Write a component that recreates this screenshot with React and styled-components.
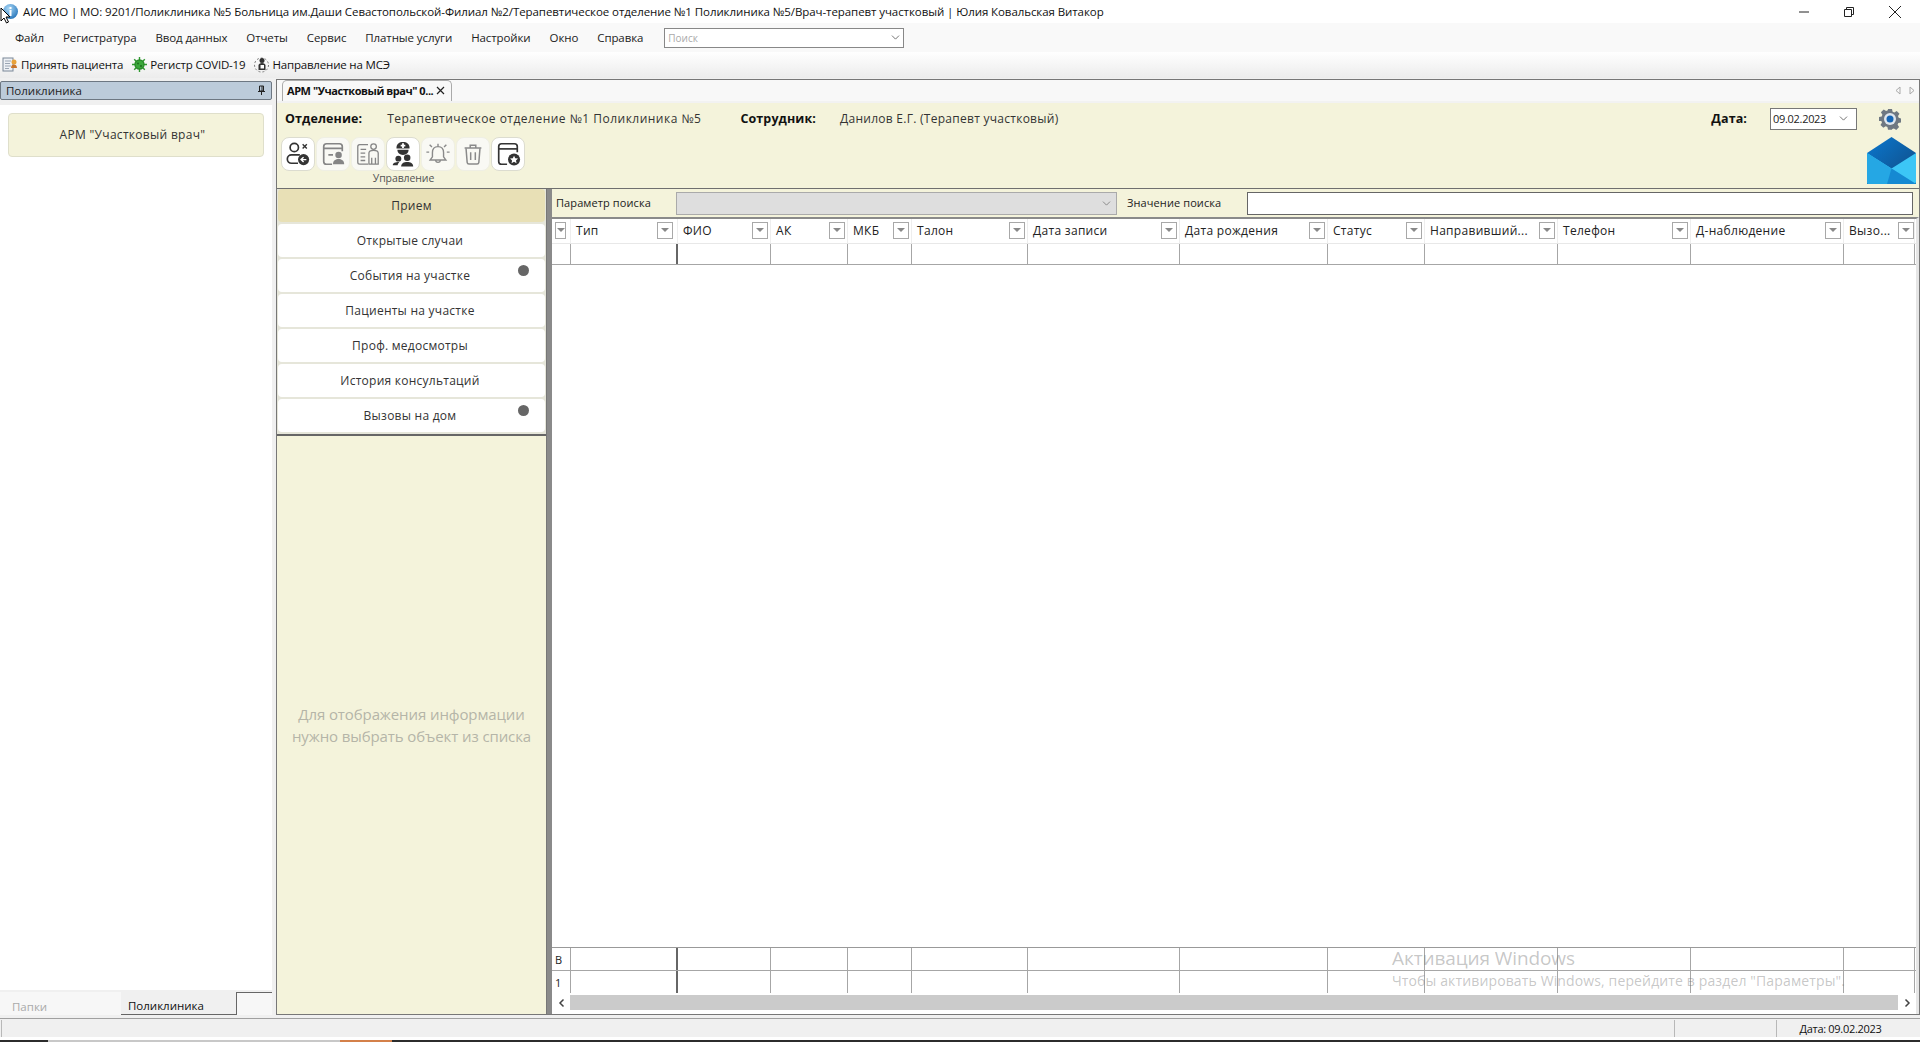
import styled, { createGlobalStyle } from "styled-components";
import { ChevronDown } from "lucide-react";

const GlobalStyle = createGlobalStyle`
  html, body {
    margin: 0;
    padding: 0;
    background: #fff;
    overflow: hidden;
  }
  * { box-sizing: border-box; }
  body {
    font-family: "Open Sans", "Noto Sans", "Liberation Sans", sans-serif;
    font-size: 12px;
    color: #222;
  }
`;

const COLUMNS = "19px 107px 93px 77px 64px 116px 152px 148px 97px 133px 133px 153px 71px";

const Window = styled.div`
  position: relative;
  display: flex;
  flex-direction: column;
  width: 1920px;
  height: 1042px;
  overflow: hidden;
  background: #fff;
`;

const TitleBar = styled.div`
  display: flex;
  align-items: center;
  height: 23px;
  flex: none;
  padding-left: 2px;
  background: #fff;
`;

const TitleText = styled.div`
  margin-left: 4px;
  font-size: 11.5px;
  letter-spacing: -0.08px;
  color: #111;
  white-space: nowrap;
`;

const WindowControls = styled.div`
  display: flex;
  align-items: center;
  margin-left: auto;
  gap: 33px;
  padding-right: 18px;
`;

const MenuBar = styled.div`
  display: flex;
  align-items: center;
  gap: 19px;
  height: 29px;
  flex: none;
  padding-left: 15px;
  background: #f9f9f9;
`;

const MenuItem = styled.span`
  font-size: 11.5px;
  letter-spacing: -0.1px;
  color: #222;
`;

const SearchCombo = styled.div`
  display: flex;
  align-items: center;
  justify-content: space-between;
  width: 240px;
  height: 20px;
  margin-left: 2px;
  padding: 0 1px 0 3px;
  background: #fff;
  border: 1px solid #888;
  font-size: 10px;
  color: #aaa;
`;

const ToolBar = styled.div`
  display: flex;
  align-items: center;
  height: 26px;
  flex: none;
  padding: 0 0 2px 2px;
  background: linear-gradient(#fff, #ececec);
`;

const ToolButton = styled.div`
  display: flex;
  align-items: center;
  gap: 2px;
  margin-right: 8px;
  font-size: 11.5px;
  letter-spacing: -0.18px;
  color: #111;
  white-space: nowrap;
`;

const Body = styled.div`
  display: flex;
  flex: 1;
  min-height: 0;
  background: #f0f0f0;
`;

const LeftPane = styled.div`
  display: flex;
  flex-direction: column;
  width: 272px;
  flex: none;
  padding-top: 3px;
`;

const PaneHeader = styled.div`
  display: flex;
  align-items: center;
  justify-content: space-between;
  height: 19px;
  flex: none;
  padding: 0 5px 1px;
  background: #bccbda;
  border: 1px solid #6d7782;
  border-radius: 2px;
  font-size: 11.5px;
  color: #222;
`;

const PaneContent = styled.div`
  flex: 1;
  margin-top: 5px;
  padding: 8px 8px 0;
  background: #fff;
`;

const ArmCard = styled.div`
  display: flex;
  align-items: center;
  justify-content: center;
  height: 44px;
  padding: 0 7px 1px 0;
  background: #f4f3db;
  border: 1px solid #dfdfcb;
  border-radius: 4px;
  font-size: 12px;
  letter-spacing: 0.3px;
  color: #333;
`;

const PaneTabs = styled.div`
  display: flex;
  height: 23px;
  flex: none;
  margin-top: 2px;
  margin-bottom: 3px;
  background: #f7f7f7;
`;

const PaneTab = styled.div`
  display: flex;
  align-items: flex-end;
  width: ${(p) => p.$width}px;
  padding-left: ${(p) => p.$pad}px;
  font-size: 11.5px;
  line-height: 16px;
  color: ${(p) => (p.$active ? "#111" : "#aaa")};
  background: ${(p) => (p.$active ? "#f0f0f0" : "transparent")};
  border-bottom: ${(p) => (p.$active ? "1px solid #666" : "none")};
  border-right: ${(p) => (p.$active ? "1px solid #666" : "none")};
`;

const PaneTabRest = styled.div`
  flex: 1;
  border-top: 1px solid #666;
`;

const MainPane = styled.div`
  display: flex;
  flex-direction: column;
  flex: 1;
  min-width: 0;
  margin: 1px 0 3px 4px;
  background: #f8f8f8;
  border: 1px solid #777;
`;

const TabStrip = styled.div`
  display: flex;
  align-items: flex-end;
  height: 23px;
  flex: none;
  padding-left: 5px;
  border-bottom: 2px solid #f2f2f2;
`;

const DocTab = styled.div`
  display: flex;
  align-items: center;
  justify-content: space-between;
  width: 170px;
  height: 21px;
  padding: 0 6px 2px 4px;
  background: #f8f8f8;
  border: 1px solid #aaa;
  border-bottom: none;
  border-radius: 5px 5px 0 0;
  font-size: 11px;
  font-weight: 700;
  letter-spacing: -0.45px;
  color: #111;
  white-space: nowrap;
`;

const TabArrows = styled.div`
  display: flex;
  gap: 8px;
  margin-left: auto;
  margin-right: 4px;
  align-self: center;
`;

const WorkHeader = styled.div`
  display: flex;
  height: 85px;
  flex: none;
  background: #f4f3db;
`;

const HeaderMain = styled.div`
  display: flex;
  flex-direction: column;
  flex: 1;
  min-width: 0;
  padding: 4px 0 0 8px;
`;

const HeaderSide = styled.div`
  display: flex;
  flex-direction: column;
  align-items: flex-end;
  flex: none;
  padding: 4px 3px 0 0;
`;

const InfoRow = styled.div`
  display: flex;
  align-items: center;
  height: 24px;
  padding-bottom: 1px;
`;

const InfoLabel = styled.span`
  font-size: 12.5px;
  font-weight: 700;
  letter-spacing: 0.1px;
  color: #111;
  margin-left: ${(p) => p.$left || 0}px;
`;

const InfoValue = styled.span`
  font-size: 12px;
  letter-spacing: ${(p) => p.$spacing}px;
  color: #333;
  margin-left: ${(p) => p.$left || 0}px;
`;

const DateCombo = styled.div`
  display: flex;
  align-items: center;
  justify-content: space-between;
  width: 87px;
  height: 22px;
  margin-left: 23px;
  padding: 0 6px 0 2px;
  background: #fff;
  border: 1px solid #777;
  font-size: 11px;
  letter-spacing: -0.3px;
  color: #222;
`;

const GearSlot = styled.div`
  display: flex;
  margin-left: 22px;
  margin-right: 15px;
`;

const IconRow = styled.div`
  display: flex;
  gap: 1px;
  margin-top: 6px;
  margin-left: -4px;
`;

const IconButton = styled.div`
  display: flex;
  align-items: center;
  justify-content: center;
  width: 34px;
  height: 34px;
  background: ${(p) => (p.$off ? "#f9f9f4" : "#fff")};
  border: 1px solid ${(p) => (p.$off ? "#efefe4" : "#dcdcd0")};
  border-radius: 8px;
`;

const GroupLabel = styled.div`
  width: 245px;
  margin-left: -4px;
  text-align: center;
  font-size: 10.5px;
  letter-spacing: -0.1px;
  color: #555;
  line-height: 14px;
`;

const MailSlot = styled.div`
  display: flex;
  margin-top: 6px;
`;

const WorkArea = styled.div`
  display: flex;
  flex: 1;
  min-height: 0;
  border-top: 1px solid #6f6f6f;
  background: #f4f3db;
`;

const NavColumn = styled.div`
  display: flex;
  flex-direction: column;
  width: 270px;
  flex: none;
  border-right: 1px solid #777;
`;

const NavList = styled.div`
  display: flex;
  flex-direction: column;
  gap: 2px;
  height: 247px;
  flex: none;
  padding: 0 1px 1px;
  background: #e6e6da;
  border-bottom: 2px solid #666;
`;

const NavItem = styled.div`
  position: relative;
  display: flex;
  align-items: center;
  justify-content: center;
  height: 33px;
  flex: none;
  padding: ${(p) => (p.$active ? "0 0 1px 0" : "0 3px 1px 0")};
  background: ${(p) => (p.$active ? "#e8e0b6" : "#fff")};
  border-radius: 4px;
  font-size: 12px;
  letter-spacing: 0.25px;
  color: #333;
`;

const NavDot = styled.span`
  position: absolute;
  top: 6px;
  right: 16px;
  width: 11px;
  height: 11px;
  border-radius: 50%;
  background: #666;
`;

const NavEmpty = styled.div`
  display: flex;
  flex: 1;
  align-items: center;
  justify-content: center;
  padding-bottom: 1px;
  text-align: center;
  font-size: 15px;
  line-height: 22px;
  letter-spacing: -0.1px;
  color: #b5b5a8;
`;

const Gutter = styled.div`
  width: 5px;
  flex: none;
  background: #8a8a8a;
`;

const RightColumn = styled.div`
  display: flex;
  flex-direction: column;
  flex: 1;
  min-width: 0;
`;

const SearchRow = styled.div`
  display: flex;
  align-items: center;
  height: 28px;
  flex: none;
  padding-left: 4px;
  font-size: 11px;
  letter-spacing: 0.1px;
  color: #222;
`;

const SearchLabel = styled.span`
  width: ${(p) => p.$width}px;
  flex: none;
  padding-bottom: 2px;
`;

const ParamSelect = styled.div`
  display: flex;
  align-items: center;
  justify-content: flex-end;
  width: 441px;
  height: 23px;
  margin-right: 10px;
  padding-right: 3px;
  background: #dedede;
  border: 1px solid #aaa;
`;

const ValueInput = styled.div`
  width: 666px;
  height: 23px;
  background: #fff;
  border: 1px solid #666;
`;

const Table = styled.div`
  display: flex;
  flex-direction: column;
  flex: 1;
  min-height: 0;
  background: #fff;
  border-top: 2px solid #8a8a8a;
  border-right: 3px solid #e6e6e6;
`;

const Row = styled.div`
  display: grid;
  grid-template-columns: ${COLUMNS};
  height: ${(p) => p.$height}px;
  flex: none;
  border-bottom: 1px solid ${(p) => p.$line};
`;

const HeadCell = styled.div`
  display: flex;
  align-items: center;
  justify-content: space-between;
  min-width: 0;
  padding: 0 ${(p) => p.$right ?? 2}px 2px 5px;
  border-right: 1px solid #eee;
  font-size: 12px;
  letter-spacing: 0.3px;
  color: #222;
  white-space: nowrap;
`;

const FilterButton = styled.span`
  display: flex;
  align-items: center;
  justify-content: center;
  width: ${(p) => p.$width || 16}px;
  height: 17px;
  flex: none;
  background: #fff;
  border: 1px solid #a8a8a8;
  &::after {
    content: "";
    border-left: 4px solid transparent;
    border-right: 4px solid transparent;
    border-top: 4px solid #888;
  }
`;

const RowHeadCell = styled(HeadCell)`
  padding: 0 0 2px 3px;
`;

const DataCell = styled.div`
  display: flex;
  align-items: center;
  padding-left: 3px;
  border-right: ${(p) => (p.$thick ? "2px solid #666" : "1px solid #a6a6a6")};
  font-size: 11px;
  color: #222;
`;

const TableSpacer = styled.div`
  flex: 1;
  border-bottom: 1px solid #999;
`;

const ScrollBar = styled.div`
  display: flex;
  align-items: center;
  justify-content: space-between;
  height: 20px;
  flex: none;
  padding: 1px 0 4px;
`;

const ScrollArrow = styled.span`
  display: flex;
  align-items: center;
  justify-content: center;
  width: 18px;
  flex: none;
`;

const ScrollThumb = styled.div`
  flex: 1;
  height: 15px;
  background: #cbcbcb;
`;

const StatusBar = styled.div`
  display: flex;
  height: 19px;
  flex: none;
  padding: 1px 16px 0 1px;
  gap: 2px;
  background: #f0f0f0;
  border-top: 1px solid #a0a0a0;
`;

const StatusCell = styled.div`
  display: flex;
  align-items: center;
  justify-content: ${(p) => (p.$fill ? "flex-start" : "center")};
  flex: ${(p) => (p.$fill ? 1 : "none")};
  width: ${(p) => (p.$width ? `${p.$width}px` : "auto")};
  border-left: 1px solid #b8b8b8;
  font-size: 11px;
  letter-spacing: -0.3px;
  color: #111;
`;

const Gap = styled.div`
  height: 3px;
  flex: none;
  background: #fff;
`;

const TaskStrip = styled.div`
  display: flex;
  height: 2px;
  flex: none;
  background: #2c2c2c;
`;

const TaskPiece = styled.div`
  width: ${(p) => p.$width}px;
  background: ${(p) => p.$color};
`;

const Watermark = styled.div`
  position: absolute;
  left: 1392px;
  top: 945px;
  color: rgba(120, 120, 120, 0.42);
  pointer-events: none;
  white-space: nowrap;
`;

const WatermarkTitle = styled.div`
  font-size: 19px;
  line-height: 26px;
  letter-spacing: -0.1px;
`;

const WatermarkText = styled.div`
  font-size: 14px;
  line-height: 20px;
  letter-spacing: 0.13px;
`;

const Cursor = styled.svg`
  position: absolute;
  left: 0;
  top: 7px;
`;

const AppIcon = () => (
  <svg width="17" height="17" viewBox="0 0 17 17">
    <defs>
      <radialGradient id="ball" cx="0.4" cy="0.3" r="0.8">
        <stop offset="0" stopColor="#a9d8f7" />
        <stop offset="1" stopColor="#1c6db5" />
      </radialGradient>
    </defs>
    <circle cx="8.5" cy="8.5" r="7.5" fill="url(#ball)" />
    <rect x="7.5" y="7" width="2" height="6" fill="#fff" />
    <rect x="7.5" y="4" width="2" height="2" fill="#fff" />
  </svg>
);

const PatientIcon = () => (
  <svg width="17" height="17" viewBox="0 0 17 17">
    <rect x="1" y="2" width="10" height="13" fill="#eef1f5" stroke="#7a8797" />
    <path d="M3 5h6M3 7.5h5M3 10h6M3 12.5h4" stroke="#9aa5b3" />
    <circle cx="12" cy="6" r="2.5" fill="#e8a23a" />
    <path d="M9 12c0-2.500 1.500-3.500 3-3.500s3 1 3 3.500z" fill="#c9742a" />
  </svg>
);

const VirusIcon = () => (
  <svg width="17" height="17" viewBox="0 0 17 17" stroke="#2f9a2f" strokeWidth="1.4">
    <path d="M8.500 1v15M1 8.500h15M3.200 3.200l10.600 10.600M13.800 3.200L3.200 13.800" />
    <circle cx="8.500" cy="8.500" r="4.500" fill="#3aa83a" stroke="#2b8a2b" />
    <circle cx="7" cy="7.500" r="1" fill="#1f6d1f" stroke="none" />
    <circle cx="10" cy="10" r="1" fill="#1f6d1f" stroke="none" />
  </svg>
);

const ReferralIcon = () => (
  <svg width="17" height="17" viewBox="0 0 17 17">
    <circle cx="8.500" cy="9" r="7" fill="none" stroke="#777" strokeDasharray="2 2" />
    <circle cx="9" cy="4.500" r="2.500" fill="#333" />
    <path d="M5.500 14V9.500c0-1.500 1.500-2.500 3.500-2.500s3.500 1 3.500 2.500V14z" fill="#333" />
    <rect x="7.500" y="9" width="3.500" height="3.500" fill="#fff" />
  </svg>
);

const LeaveIcon = () => (
  <svg width="26" height="26" viewBox="0 0 28 28" fill="none" stroke="#333" strokeWidth="1.800">
    <circle cx="10" cy="7" r="4.500" />
    <path d="M19 3.500l4.500 4.500M23.500 3.500L19 8" strokeWidth="1.500" />
    <path d="M16 15H7a4.500 4.500 0 0 0 0 9h7" />
    <circle cx="20" cy="20" r="6" fill="#333" stroke="none" />
    <path d="M23 20h-5.500M20 17.500L17.300 20l2.700 2.500" stroke="#fff" strokeWidth="1.500" />
  </svg>
);

const RecordIcon = () => (
  <svg width="26" height="26" viewBox="0 0 28 28" fill="none" stroke="#858585" strokeWidth="1.800">
    <path d="M13 25H7a3 3 0 0 1-3-3V6a3 3 0 0 1 3-3h14a3 3 0 0 1 3 3v5" />
    <path d="M4 8h20M9 15h5" />
    <circle cx="20" cy="15" r="3.500" fill="#858585" stroke="none" />
    <path d="M14 25c0-4 3-5.500 6-5.500s6 1.500 6 5.500z" fill="#858585" stroke="none" />
  </svg>
);

const ProfileIcon = () => (
  <svg width="26" height="26" viewBox="0 0 28 28" fill="none" stroke="#858585" strokeWidth="1.400">
    <path d="M14 4H5a2 2 0 0 0-2 2v17a2 2 0 0 0 2 2h9" />
    <path d="M6 9h6M6 13h5M6 17h5M6 21h5" />
    <circle cx="20" cy="6" r="3" />
    <path d="M15 25V13c0-2 2-3 5-3s5 1 5 3v12zM18 25v-7M22 25v-7" />
  </svg>
);

const DoctorIcon = () => (
  <svg width="26" height="26" viewBox="0 0 28 28" fill="#333">
    <path d="M7 7c0-4 3-6 7-6s7 2 7 6v1H7z" />
    <path d="M8 9.500h12c0 3.500-2.500 5.500-6 5.500s-6-2-6-5.500z" />
    <path d="M13 2.500h2V4h1.500v2H15v1.500h-2V6h-1.500V4H13z" fill="#fff" />
    <circle cx="18.500" cy="18" r="3.500" />
    <path d="M12 27.500c0-3.500 3-5 6.500-5s6.500 1.500 6.500 5z" />
    <circle cx="9" cy="19" r="3.200" />
    <path d="M3 26c0-2.500 2.500-3.500 7-3.500-.8 1-1.500 2-1.800 3.500z" />
  </svg>
);

const BellIcon = () => (
  <svg width="26" height="26" viewBox="0 0 28 28" fill="none" stroke="#8a8a8a" strokeWidth="1.500">
    <path d="M14 6c-4 0-6 3-6 6.500V17l-2.500 3.500h17L20 17v-4.500C20 9 18 6 14 6z" />
    <path d="M11.500 20.500a2.500 2.500 0 0 0 5 0" />
    <path d="M14 3v3M5 4l2.500 2.500M23 4l-2.500 2.500M1.500 12h3M23.500 12h3" />
  </svg>
);

const TrashIcon = () => (
  <svg width="26" height="26" viewBox="0 0 28 28" fill="none" stroke="#8a8a8a" strokeWidth="1.600">
    <path d="M5 7.500h18M11 7V4.500h6V7" />
    <path d="M6.500 8l1.200 15a2 2 0 0 0 2 1.800h8.600a2 2 0 0 0 2-1.800L21.500 8" />
    <path d="M11.500 12v8.500M16.500 12v8.500" />
  </svg>
);

const FavoriteIcon = () => (
  <svg width="26" height="26" viewBox="0 0 28 28" fill="none" stroke="#333" strokeWidth="1.800">
    <path d="M13 25H7a3 3 0 0 1-3-3V6a3 3 0 0 1 3-3h14a3 3 0 0 1 3 3v6" />
    <path d="M4 8.500h20" />
    <circle cx="20.500" cy="20" r="6.500" fill="#333" stroke="none" />
    <path d="M20.500 15.800l1.300 2.800 3 .3-2.200 2 .6 3-2.700-1.500-2.700 1.500.6-3-2.200-2 3-.3z" fill="#fff" stroke="none" />
  </svg>
);

const GearIcon = () => (
  <svg width="22" height="22" viewBox="0 0 22 22">
    <path
      d="M9 1h4l.6 2.700 1.700.7 2.400-1.500 2.800 2.800-1.500 2.400.7 1.700 2.300.6v4l-2.700.6-.7 1.700 1.500 2.400-2.800 2.800-2.400-1.500-1.700.7L13 21.700H9l-.6-2.700-1.700-.7-2.400 1.500-2.800-2.800 1.500-2.400-.7-1.700L0 13V9l2.700-.6.7-1.700L1.900 4.300l2.800-2.800 2.400 1.500 1.700-.7z"
      fill="#6f7882"
    />
    <circle cx="11" cy="11" r="6" fill="#dfe6ee" />
    <circle cx="11" cy="11" r="3.500" fill="#1565b5" />
  </svg>
);

const MailIcon = () => (
  <svg width="49" height="47" viewBox="0 0 49 47">
    <defs>
      <linearGradient id="flap" x1="0" y1="0" x2="1" y2="1">
        <stop offset="0" stopColor="#0a78d0" />
        <stop offset="1" stopColor="#11497f" />
      </linearGradient>
    </defs>
    <path d="M24.500 0L49 16v31H0V16z" fill="url(#flap)" />
    <path d="M0 16l24.500 15.500L49 16v29a2 2 0 0 1-2 2H2a2 2 0 0 1-2-2z" fill="#3cc6f6" />
    <path d="M0 16l24.500 15.500L49 47H2a2 2 0 0 1-2-2z" fill="#25a7e4" />
    <path d="M24.500 31.500L49 47H20z" fill="#1589d2" />
  </svg>
);

const columns = [
  { title: "Тип", right: 4 },
  { title: "ФИО" },
  { title: "АК" },
  { title: "МКБ" },
  { title: "Талон" },
  { title: "Дата записи" },
  { title: "Дата рождения" },
  { title: "Статус" },
  { title: "Направивший..." },
  { title: "Телефон" },
  { title: "Д-наблюдение" },
  { title: "Вызо...", right: 0 },
];

const navItems = [
  { title: "Прием", active: true },
  { title: "Открытые случаи" },
  { title: "События на участке", dot: true },
  { title: "Пациенты на участке" },
  { title: "Проф. медосмотры" },
  { title: "История консультаций" },
  { title: "Вызовы на дом", dot: true },
];

const tools = [
  { Icon: LeaveIcon },
  { Icon: RecordIcon, off: true },
  { Icon: ProfileIcon, off: true },
  { Icon: DoctorIcon },
  { Icon: BellIcon, off: true },
  { Icon: TrashIcon, off: true },
  { Icon: FavoriteIcon },
];

const menu = ["Файл", "Регистратура", "Ввод данных", "Отчеты", "Сервис", "Платные услуги", "Настройки", "Окно", "Справка"];

const DataRow = ({ label, height, line }) => (
  <Row $height={height} $line={line}>
    <DataCell>{label}</DataCell>
    {columns.map((c, i) => (
      <DataCell key={c.title} $thick={i === 0}></DataCell>
    ))}
  </Row>
);

const App = () => {
  return (
    <Window>
      <GlobalStyle />
      <TitleBar>
        <AppIcon />
        <TitleText>
          АИС МО | МО: 9201/Поликлиника №5 Больница им.Даши Севастопольской-Филиал №2/Терапевтическое отделение №1 Поликлиника №5/Врач-терапевт участковый | Юлия Ковальская Витакор
        </TitleText>
        <WindowControls>
          <svg width="12" height="12" viewBox="0 0 12 12"><path d="M1 6h10" stroke="#222" /></svg>
          <svg width="12" height="12" viewBox="0 0 12 12" fill="none" stroke="#222"><path d="M1.500 3.500h7v7h-7zM3.500 3.500v-2h7v7h-2" /></svg>
          <svg width="14" height="14" viewBox="0 0 14 14"><path d="M1 1l12 12M13 1L1 13" stroke="#222" /></svg>
        </WindowControls>
      </TitleBar>

      <MenuBar>
        {menu.map((m) => (
          <MenuItem key={m}>{m}</MenuItem>
        ))}
        <SearchCombo>
          Поиск
          <ChevronDown size={13} color="#555" strokeWidth={1.500} />
        </SearchCombo>
      </MenuBar>

      <ToolBar>
        <ToolButton><PatientIcon />Принять пациента</ToolButton>
        <ToolButton><VirusIcon />Регистр COVID-19</ToolButton>
        <ToolButton><ReferralIcon />Направление на МСЭ</ToolButton>
      </ToolBar>

      <Body>
        <LeftPane>
          <PaneHeader>
            Поликлиника
            <svg width="9" height="10" viewBox="0 0 9 10" fill="none" stroke="#222"><path d="M2.500 1h4v5h-4zM5 1v5M1 6.500h7M4.500 7v3" /></svg>
          </PaneHeader>
          <PaneContent>
            <ArmCard>АРМ "Участковый врач"</ArmCard>
          </PaneContent>
          <PaneTabs>
            <PaneTab $width={121} $pad={12}>Папки</PaneTab>
            <PaneTab $width={116} $pad={7} $active>Поликлиника</PaneTab>
            <PaneTabRest />
          </PaneTabs>
        </LeftPane>

        <MainPane>
          <TabStrip>
            <DocTab>
              АРМ "Участковый врач" 0...
              <svg width="9" height="9" viewBox="0 0 9 9"><path d="M1 1l7 7M8 1L1 8" stroke="#222" strokeWidth="1.200" /></svg>
            </DocTab>
            <TabArrows>
              <svg width="6" height="9" viewBox="0 0 6 9"><path d="M5 1v7L1 4.500z" fill="none" stroke="#aaa" /></svg>
              <svg width="6" height="9" viewBox="0 0 6 9"><path d="M1 1v7l4-3.500z" fill="none" stroke="#aaa" /></svg>
            </TabArrows>
          </TabStrip>

          <WorkHeader>
            <HeaderMain>
              <InfoRow>
                <InfoLabel>Отделение:</InfoLabel>
                <InfoValue $left={25} $spacing={0.48}>Терапевтическое отделение №1 Поликлиника №5</InfoValue>
                <InfoLabel $left={39}>Сотрудник:</InfoLabel>
                <InfoValue $left={24} $spacing={0.27}>Данилов Е.Г. (Терапевт участковый)</InfoValue>
              </InfoRow>
              <IconRow>
                {tools.map(({ Icon, off }, i) => (
                  <IconButton key={i} $off={off}><Icon /></IconButton>
                ))}
              </IconRow>
              <GroupLabel>Управление</GroupLabel>
            </HeaderMain>
            <HeaderSide>
              <InfoRow>
                <InfoLabel>Дата:</InfoLabel>
                <DateCombo>
                  09.02.2023
                  <ChevronDown size={13} color="#555" strokeWidth={1.500} />
                </DateCombo>
                <GearSlot><GearIcon /></GearSlot>
              </InfoRow>
              <MailSlot><MailIcon /></MailSlot>
            </HeaderSide>
          </WorkHeader>

          <WorkArea>
            <NavColumn>
              <NavList>
                {navItems.map((n) => (
                  <NavItem key={n.title} $active={n.active}>
                    {n.title}
                    {n.dot && <NavDot />}
                  </NavItem>
                ))}
              </NavList>
              <NavEmpty>
                Для отображения информации
                <br />
                нужно выбрать объект из списка
              </NavEmpty>
            </NavColumn>
            <Gutter />
            <RightColumn>
              <SearchRow>
                <SearchLabel $width={120}>Параметр поиска</SearchLabel>
                <ParamSelect>
                  <ChevronDown size={13} color="#777" strokeWidth={1.500} />
                </ParamSelect>
                <SearchLabel $width={120}>Значение поиска</SearchLabel>
                <ValueInput />
              </SearchRow>
              <Table>
                <Row $height={25} $line="#e8e8e8">
                  <RowHeadCell><FilterButton $width={11} /></RowHeadCell>
                  {columns.map((c) => (
                    <HeadCell key={c.title} $right={c.right}>
                      {c.title}
                      <FilterButton />
                    </HeadCell>
                  ))}
                </Row>
                <DataRow label="" height={21} line="#a6a6a6" />
                <TableSpacer />
                <DataRow label="В" height={23} line="#a6a6a6" />
                <DataRow label="1" height={23} line="transparent" />
                <ScrollBar>
                  <ScrollArrow>
                    <svg width="7" height="10" viewBox="0 0 7 10"><path d="M5.500 1.500L2 5l3.500 3.500" fill="none" stroke="#444" strokeWidth="1.500" /></svg>
                  </ScrollArrow>
                  <ScrollThumb />
                  <ScrollArrow>
                    <svg width="7" height="10" viewBox="0 0 7 10"><path d="M1.500 1.500L5 5 1.500 8.500" fill="none" stroke="#444" strokeWidth="1.500" /></svg>
                  </ScrollArrow>
                </ScrollBar>
              </Table>
            </RightColumn>
          </WorkArea>
        </MainPane>
      </Body>

      <StatusBar>
        <StatusCell $fill />
        <StatusCell $width={100} />
        <StatusCell $width={128}>Дата: 09.02.2023</StatusCell>
      </StatusBar>
      <Gap />
      <TaskStrip>
        <TaskPiece $width={48} $color="#2c2c2c" />
        <TaskPiece $width={292} $color="#c8c8c8" />
        <TaskPiece $width={52} $color="#d4804a" />
      </TaskStrip>

      <Watermark>
        <WatermarkTitle>Активация Windows</WatermarkTitle>
        <WatermarkText>Чтобы активировать Windows, перейдите в раздел "Параметры".</WatermarkText>
      </Watermark>

      <Cursor width="12" height="17" viewBox="0 0 12 17">
        <path d="M1 1v13l3-3 2.500 5 2-1L6 10h4z" fill="#fff" stroke="#000" />
      </Cursor>
    </Window>
  );
};

export default App;
